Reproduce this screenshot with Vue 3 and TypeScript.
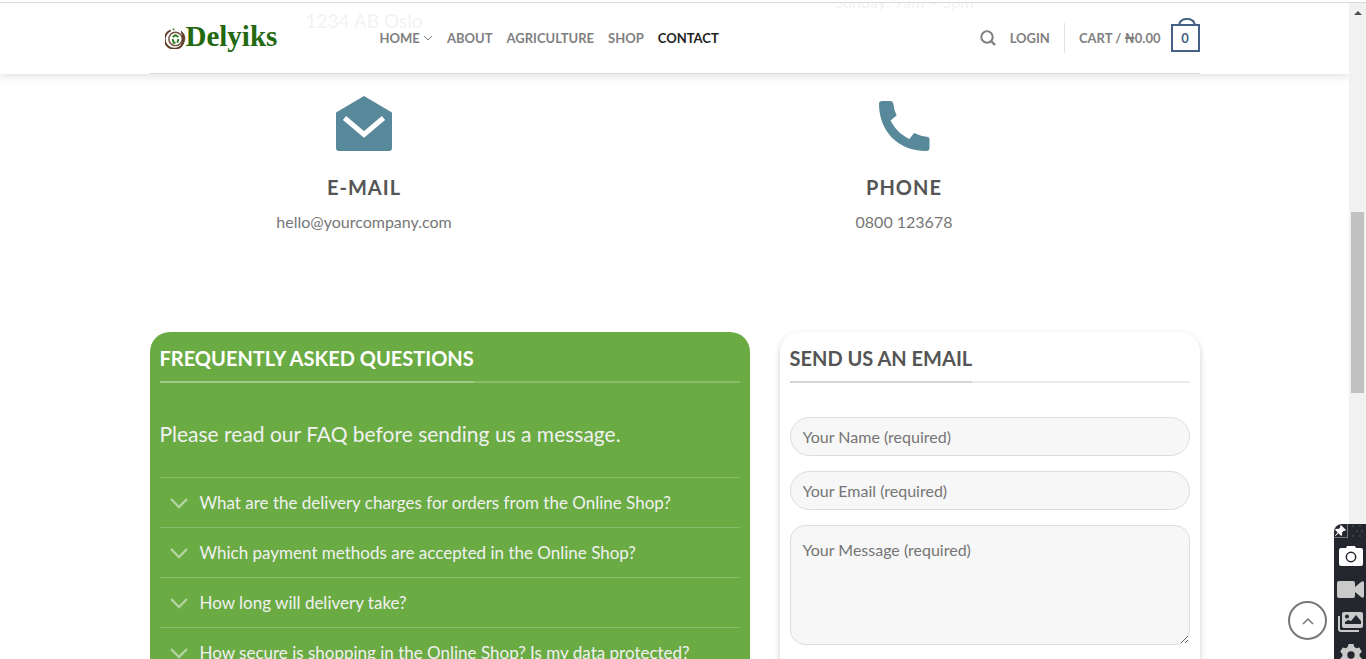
<script setup lang="ts">
import { ref } from 'vue'

interface NavItem {
  label: string
  active?: boolean
  menu?: boolean
}

const nav: NavItem[] = [
  { label: 'Home', menu: true },
  { label: 'About' },
  { label: 'Agriculture' },
  { label: 'Shop' },
  { label: 'Contact', active: true },
]

const questions: string[] = [
  'What are the delivery charges for orders from the Online Shop?',
  'Which payment methods are accepted in the Online Shop?',
  'How long will delivery take?',
  'How secure is shopping in the Online Shop? Is my data protected?',
]

const name = ref('')
const email = ref('')
const message = ref('')
</script>

<template>
  <div class="window">
    <div class="page">
      <header class="header">
        <div class="container header-inner">
          <a href="#" class="logo" aria-label="Delyiks">
            <svg class="logo-mark" viewBox="0 0 22 22" aria-hidden="true">
              <path d="M6 3A10 10 0 1 0 19 16" fill="none" stroke="#5b3a26" stroke-width="2" />
              <path d="M17 4c5 4 5 11 0 15c2-5 2-10 0-15z" fill="#5b3a26" stroke="#5b3a26" />
              <circle cx="11" cy="12" r="7" fill="#fff" stroke="#6d5140" stroke-width="1.5" />
              <path d="M8 10l3-2 3 2M14 12l-1 4M8 12l1 4 2 0" fill="none" stroke="#2c7a1b" stroke-width="2" />
              <circle cx="9" cy="2" r="1" fill="#2c7a1b" />
            </svg>
            <span>Delyiks</span>
          </a>
          <nav class="nav" aria-label="Main">
            <a v-for="item in nav" :key="item.label" href="#" :class="{ active: item.active }">
              {{ item.label }}
              <svg v-if="item.menu" class="caret" viewBox="0 0 10 6" aria-hidden="true">
                <path d="M1 1l4 4 4-4" fill="none" stroke="currentColor" />
              </svg>
            </a>
          </nav>
          <div class="nav tools">
            <a href="#" class="search" aria-label="Search">
              <svg viewBox="0 0 16 16" aria-hidden="true">
                <circle cx="7" cy="7" r="5.7" fill="none" stroke="currentColor" stroke-width="2" />
                <path d="M11 11l4 4" stroke="currentColor" stroke-width="2.4" />
              </svg>
            </a>
            <a href="#">Login</a>
            <span class="divider"></span>
            <a href="#" class="cart">
              <span>Cart / ₦0.00</span>
              <span class="bag">0</span>
            </a>
          </div>
        </div>
      </header>

      <main class="content">
        <section class="container columns details">
          <p class="address">1234 AB Oslo</p>
          <p class="hours">Sunday: 9am – 5pm</p>
        </section>

        <section class="container columns contacts">
          <div class="contact">
            <svg viewBox="0 0 60 60" aria-hidden="true">
              <path d="M30 2L58 18.500V54a3 3 0 0 1-3 3H5a3 3 0 0 1-3-3V18.500z" fill="#58899a" />
              <path d="M10.500 24L30 40.500 49.500 24" fill="none" stroke="#fff" stroke-width="5" />
            </svg>
            <h3>E-mail</h3>
            <p>hello@yourcompany.com</p>
          </div>
          <div class="contact">
            <svg viewBox="0 0 60 60" aria-hidden="true">
              <path d="M8 7H16.500Q19 7 19.300 9.500Q20 16 22.600 21.500L16.500 26.500C21 35 27 41 35.500 45L40 39Q47 42.300 53 42.700Q55.500 43 55.500 45V54Q55.500 57 52 57C24 57 5 37 5 10Q5 7 8 7z" fill="#58899a" />
            </svg>
            <h3>Phone</h3>
            <p>0800 123678</p>
          </div>
        </section>

        <section class="container cards">
          <div class="card faq">
            <h2><span>Frequently asked questions</span></h2>
            <p class="lead">Please read our FAQ before sending us a message.</p>
            <ul>
              <li v-for="question in questions" :key="question">
                <button type="button">
                  <svg viewBox="0 0 18 12" aria-hidden="true">
                    <path d="M1 2l8 8 8-8" fill="none" stroke="currentColor" stroke-width="2.4" />
                  </svg>
                  {{ question }}
                </button>
              </li>
            </ul>
          </div>
          <form class="card mail" @submit.prevent>
            <h2><span>Send us an email</span></h2>
            <input v-model="name" type="text" aria-label="Your Name" placeholder="Your Name (required)" />
            <input v-model="email" type="email" aria-label="Your Email" placeholder="Your Email (required)" />
            <textarea v-model="message" aria-label="Your Message" placeholder="Your Message (required)"></textarea>
          </form>
        </section>
      </main>

      <button type="button" class="to-top" aria-label="Go to top">
        <svg viewBox="0 0 12 8" aria-hidden="true">
          <path d="M1 7l5-5 5 5" fill="none" stroke="currentColor" stroke-width="1.5" />
        </svg>
      </button>
    </div>

    <div class="scrollbar" aria-hidden="true">
      <svg viewBox="0 0 8 4"><path d="M0 4L4 0 8 4z" fill="#505050" /></svg>
      <div class="thumb"></div>
    </div>

    <aside class="recorder" aria-label="Capture tools">
      <div class="grip">
        <svg class="pin" viewBox="0 0 13 13" aria-hidden="true">
          <path d="M7 1l5 5-1 1-1-.5-2 2 .2 2.500-1 1-2.700-2.700L1.500 12 1 11.500 3.700 8.500 1 5.800l1-1 2.500.2 2-2L6 2z" fill="#fff" />
        </svg>
        <svg class="dots" viewBox="0 0 12 14" aria-hidden="true">
          <path d="M1 1h2v2H1zM8 1h2v2H8zM5 6h2v2H5zM10 6h2v2h-2zM1 11h2v2H1zM8 11h2v2H8z" fill="#3b4046" />
        </svg>
      </div>
      <button type="button" aria-label="Take screenshot">
        <svg viewBox="0 0 26 22" aria-hidden="true">
          <path d="M3 3h5l1-2h8l1 2h5a2 2 0 0 1 2 2v14a2 2 0 0 1-2 2H3a2 2 0 0 1-2-2V5a2 2 0 0 1 2-2z" fill="#fff" />
          <circle cx="13" cy="12" r="4.700" fill="none" stroke="#23272d" stroke-width="1.500" />
        </svg>
      </button>
      <button type="button" aria-label="Record video">
        <svg viewBox="0 0 26 22" aria-hidden="true">
          <path d="M1 3h14a2 2 0 0 1 2 2v13a2 2 0 0 1-2 2H1a2 2 0 0 1-2-2V5a2 2 0 0 1 2-2zM17 9l6-5q3-2 3 1v13q0 3-3 1l-6-5z" fill="#cacaca" />
        </svg>
      </button>
      <button type="button" aria-label="Open gallery">
        <svg viewBox="0 0 26 22" aria-hidden="true">
          <path d="M6 1h17a2 2 0 0 1 2 2v12a2 2 0 0 1-2 2H6a2 2 0 0 1-2-2V3a2 2 0 0 1 2-2z" fill="#cacaca" />
          <path d="M1 5v13a2 2 0 0 0 2 2h18" fill="none" stroke="#cacaca" stroke-width="2" />
          <circle cx="9" cy="5.500" r="2" fill="#23272d" />
          <path d="M7 13v-2l3-2 3 1 5-6 5 6v3z" fill="#23272d" />
        </svg>
      </button>
      <button type="button" aria-label="Settings">
        <svg viewBox="0 0 26 22" aria-hidden="true">
          <path d="M10.500 0h5l.8 3 2 1.200 3-.8 2.500 4.300-2.200 2.200v2.400l2.200 2.200-2.500 4.300-3-.8-2 1.200-.8 3h-5l-.8-3-2-1.200-3 .8-2.500-4.300 2.200-2.200V9.900L2.200 7.700l2.500-4.300 3 .8 2-1.200z" fill="#cacaca" />
          <circle cx="13" cy="11" r="3.700" fill="#23272d" />
        </svg>
      </button>
    </aside>
  </div>
</template>

<style>
body {
  margin: 0;
}
</style>

<style scoped>
* {
  box-sizing: border-box;
}
h2, h3, p, ul {
  margin: 0;
  padding: 0;
}
a {
  color: inherit;
  text-decoration: none;
}
button {
  padding: 0;
  border: 0;
  background: none;
  font: inherit;
  color: inherit;
}
.window {
  position: relative;
  display: grid;
  grid-template-columns: 1fr 17px;
  height: 100vh;
  padding-top: 2px;
  overflow: hidden;
  background: #fff;
  color: #777;
  font: 16px/26px Lato, sans-serif;
}
.page {
  position: relative;
  min-width: 0;
  overflow: hidden;
  border-top: 1px solid #dadada;
}
.container {
  width: 100%;
  max-width: 1050px;
  margin: 0 auto;
}
.header {
  position: absolute;
  z-index: 2;
  top: 0;
  left: 0;
  right: 0;
  background: rgba(255, 255, 255, 0.9);
  box-shadow: 0 1px 10px rgba(0, 0, 0, 0.15);
}
.header-inner {
  display: flex;
  align-items: center;
  height: 71px;
  padding-left: 15px;
  border-bottom: 1px solid #ddd;
}
.logo {
  display: flex;
  align-items: center;
  width: 215px;
  padding-bottom: 4px;
  color: #22690f;
  font: bold 29px/32px "Liberation Serif", serif;
}
.logo-mark {
  width: 21px;
  height: 22px;
  margin-top: 4px;
}
.nav {
  display: flex;
  align-items: center;
  gap: 14px;
  font-size: 13px;
  font-weight: 700;
  line-height: 16px;
  text-transform: uppercase;
  color: #7f7f7f;
}
.nav .active {
  color: #222;
}
.caret {
  width: 10px;
  height: 6px;
  margin-bottom: 2px;
}
.tools {
  margin-left: auto;
}
.search svg {
  display: block;
  width: 16px;
  height: 16px;
}
.divider {
  width: 1px;
  height: 30px;
  background: #e3e3e3;
}
.cart {
  display: flex;
  align-items: center;
  gap: 10px;
}
.bag {
  position: relative;
  width: 29px;
  height: 28px;
  border: 2px solid #446084;
  color: #446084;
  line-height: 24px;
  text-align: center;
}
.bag::after {
  content: "";
  position: absolute;
  bottom: 100%;
  left: 50%;
  width: 14px;
  height: 6px;
  margin-left: -7px;
  border: 2px solid #446084;
  border-bottom: 0;
  border-radius: 8px 8px 0 0;
}
.content {
  margin-top: -14px;
}
.columns {
  display: grid;
  grid-template-columns: 1fr 1fr;
  gap: 111px;
  padding-right: 81px;
  text-align: center;
}
.details {
  height: 105px;
}
.address {
  padding-top: 19px;
  font-size: 19px;
}
.contact svg {
  display: block;
  width: 60px;
  height: 60px;
  margin: 0 auto 20px;
}
.contact h3 {
  margin-bottom: 9px;
  color: #555;
  font-size: 20px;
  line-height: 26px;
  letter-spacing: 1px;
  text-transform: uppercase;
}
.cards {
  display: grid;
  grid-template-columns: 10fr 7fr;
  gap: 30px;
  padding-top: 97px;
}
.card {
  padding: 10px;
  border-radius: 20px;
  box-shadow: 0 3px 6px rgba(0, 0, 0, 0.2);
}
.card h2 {
  margin-bottom: 34px;
  border-bottom: 2px solid #ececec;
  color: #555;
  font-size: 20px;
  line-height: 32px;
  text-transform: uppercase;
}
.card h2 span {
  display: inline-block;
  margin-bottom: -2px;
  padding-bottom: 7px;
  border-bottom: 2px solid #d4d4d4;
}
.faq {
  background: #6aab44;
  box-shadow: none;
  color: #f1f1f1;
}
.faq h2 {
  border-color: #89bc69;
  color: #fff;
}
.faq h2 span {
  border-color: #a2ca8a;
}
.lead {
  margin-bottom: 26px;
  font-size: 21px;
  line-height: 34px;
}
.faq ul {
  list-style: none;
}
.faq li {
  border-top: 1px solid #88bc69;
}
.faq button {
  display: flex;
  align-items: center;
  gap: 12px;
  width: 100%;
  height: 49px;
  padding-left: 10px;
  font-size: 17px;
  text-align: left;
}
.faq button svg {
  width: 18px;
  height: 12px;
  color: #b4d4a1;
}
.mail input,
.mail textarea {
  display: block;
  width: 100%;
  height: 39px;
  margin: 0 0 15px;
  padding: 0 12px;
  border: 1px solid #ddd;
  border-radius: 20px;
  outline: 0;
  background: #f7f7f7;
  color: #333;
  font: 16px/24px Lato, sans-serif;
}
.mail textarea {
  height: 120px;
  padding-top: 12px;
  border-radius: 15px;
}
.mail ::placeholder {
  color: #757575;
}
.to-top {
  position: absolute;
  right: 22px;
  bottom: 19px;
  display: grid;
  place-items: center;
  width: 39px;
  height: 39px;
  border: 2px solid #777;
  border-radius: 50%;
}
.to-top svg {
  width: 12px;
  height: 8px;
}
.scrollbar {
  padding: 8px 2px 0;
  border-top: 1px solid #dadada;
  background: #f1f1f1;
}
.scrollbar svg {
  display: block;
  width: 8px;
  height: 4px;
  margin: 0 auto 197px 3px;
}
.thumb {
  height: 181px;
  background: #c1c1c1;
}
.recorder {
  position: absolute;
  z-index: 3;
  right: 0;
  bottom: 0;
  width: 32px;
  height: 135px;
  overflow: hidden;
  border-radius: 8px 0 0 0;
  background: #23272d;
}
.grip {
  display: flex;
  gap: 3px;
  height: 16px;
  margin-bottom: 5px;
}
.pin {
  width: 14px;
  height: 14px;
  border: solid #777;
  border-width: 0 1px 1px 0;
}
.dots {
  width: 12px;
  height: 14px;
}
.recorder button {
  display: block;
  width: 26px;
  height: 22px;
  margin: 0 0 11px 4px;
}
.recorder button svg {
  display: block;
  width: 26px;
  height: 22px;
  overflow: visible;
}
</style>
